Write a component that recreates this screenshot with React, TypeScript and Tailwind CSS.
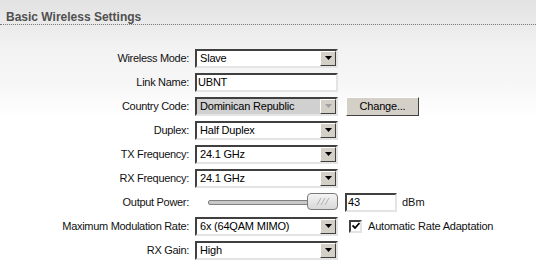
import React from "react";

const font = { fontFamily: '"Liberation Sans", Arial, sans-serif' };

function Arrow({ disabled }: { disabled?: boolean }) {
  return (
    <div className="w-[16px] h-full bg-[#d4d0c8] border border-t-white border-l-white border-b-[#404040] border-r-[#404040] flex items-center justify-center">
      <svg width="7" height="4" viewBox="0 0 7 4">
        <path d="M0 0H7L3.5 4Z" fill={disabled ? "#a0a0a0" : "#000"} />
      </svg>
    </div>
  );
}

function Select({ value, disabled }: { value: string; disabled?: boolean }) {
  return (
    <div
      className={`w-[143px] h-[19px] flex items-stretch border-2 border-t-[#404040] border-l-[#404040] border-b-[#e4e4e4] border-r-[#e4e4e4] ${
        disabled ? "bg-[#d0d0d0]" : "bg-white"
      }`}
    >
      <div className="flex-1 pl-[3px] text-[11px] tracking-[-0.2px] leading-[15px] text-black">{value}</div>
      <Arrow disabled={disabled} />
    </div>
  );
}

function Input({ value, w }: { value: string; w: string }) {
  return (
    <div
      className={`${w} h-[19px] bg-white border-2 border-t-[#404040] border-l-[#404040] border-b-[#e4e4e4] border-r-[#e4e4e4] pl-[1px] text-[11px] tracking-[-0.2px] leading-[15px] text-black`}
    >
      {value}
    </div>
  );
}

function Row({ label, children }: { label: string; children: React.ReactNode }) {
  return (
    <div className="flex items-center h-[24px]">
      <div className="w-[195px] pr-[6px] text-right text-[11px] tracking-[-0.3px] text-[#111]">{label}</div>
      <div className="flex items-center">{children}</div>
    </div>
  );
}

export default function App() {
  return (
    <div className="w-[536px] h-[263px] overflow-hidden bg-white" style={font}>
      {/* Header */}
      <div className="h-[43px] bg-gradient-to-b from-[#e2e2e2] to-[#f1f1f1] pt-[10px]">
        <div className="border-b border-dotted border-[#7a7a7a] pl-[6px] text-[12px] leading-[14px]">
          <span className="font-bold text-[#505050]">Basic Wireless Settings</span>
        </div>
      </div>

      {/* Body */}
      <div className="bg-gradient-to-b from-[#f2f2f2] via-[#f6f6f6] to-white pt-[3px]">
        <Row label="Wireless Mode:">
          <Select value="Slave" />
        </Row>
        <Row label="Link Name:">
          <Input value="UBNT" w="w-[143px]" />
        </Row>
        <Row label="Country Code:">
          <Select value="Dominican Republic" disabled />
          <div className="ml-[8px] w-[73px] h-[19px] bg-[#d4d0c8] border border-t-white border-l-white border-b-[#404040] border-r-[#404040] text-[11px] tracking-[-0.2px] leading-[17px] text-center text-black">
            Change...
          </div>
        </Row>
      </div>
      <div>
        <Row label="Duplex:">
          <Select value="Half Duplex" />
        </Row>
        <Row label="TX Frequency:">
          <Select value="24.1 GHz" />
        </Row>
        <Row label="RX Frequency:">
          <Select value="24.1 GHz" />
        </Row>
        <Row label="Output Power:">
          <div className="w-[143px] h-[18px] relative flex items-center">
            <div className="ml-[13px] flex-1 h-[5px] bg-[#c8c8c8] border border-[#808080] rounded-[2px]" />
            <div className="absolute right-0 top-0 w-[31px] h-[17px] rounded-[4px] border border-[#7a7a7a] bg-gradient-to-b from-[#f4f4f4] to-[#d8d8d8] flex items-center justify-center">
              <svg width="14" height="7" viewBox="0 0 14 7">
                <path d="M1 7L5 0M5 7L9 0M9 7L13 0" stroke="#b0b0b0" strokeWidth="1" fill="none" />
              </svg>
            </div>
          </div>
          <div className="ml-[7px]">
            <Input value="43" w="w-[52px]" />
          </div>
          <span className="ml-[5px] text-[11px] text-[#111]">dBm</span>
        </Row>
        <Row label="Maximum Modulation Rate:">
          <Select value="6x (64QAM MIMO)" />
          <div className="ml-[11px] w-[13px] h-[13px] bg-white border-2 border-t-[#404040] border-l-[#404040] border-b-[#e4e4e4] border-r-[#e4e4e4] flex items-center justify-center">
            <svg width="8" height="8" viewBox="0 0 8 8">
              <path d="M0.5 3.5L3 6L7.5 1" stroke="#000" strokeWidth="1.8" fill="none" />
            </svg>
          </div>
          <span className="ml-[6px] text-[11px] tracking-[-0.2px] text-[#111]">Automatic Rate Adaptation</span>
        </Row>
        <Row label="RX Gain:">
          <Select value="High" />
        </Row>
      </div>
    </div>
  );
}
